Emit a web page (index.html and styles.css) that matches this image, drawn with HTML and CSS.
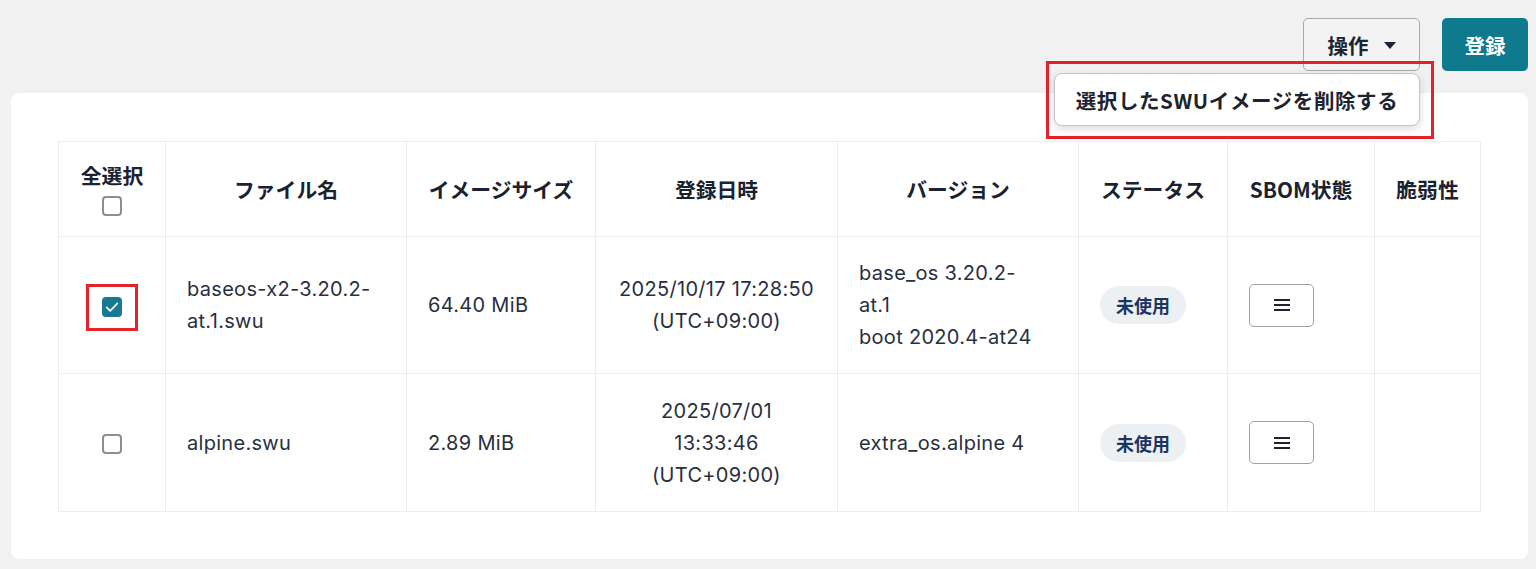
FILE: index.html
```html
<!DOCTYPE html>
<html lang="ja">
<head>
<meta charset="utf-8">
<title>SWU</title>
<link rel="stylesheet" href="styles.css">
</head>
<body>
<div class="page">
  <div class="toolbar">
    <div class="menu-wrap">
      <button class="btn btn-outline">操作 <span class="caret"></span></button>
      <div class="dropdown">
        <div class="dropdown-item">選択したSWUイメージを削除する</div>
      </div>
      <div class="highlight hl-menu"></div>
    </div>
    <button class="btn btn-primary">登録</button>
  </div>
  <div class="card">
    <table class="grid">
      <colgroup>
        <col class="c1"><col class="c2"><col class="c3"><col class="c4"><col class="c5"><col class="c6"><col class="c7"><col class="c8">
      </colgroup>
      <thead>
        <tr>
          <th><div class="selall">全選択</div><span class="cb"></span></th>
          <th>ファイル名</th>
          <th>イメージサイズ</th>
          <th>登録日時</th>
          <th>バージョン</th>
          <th>ステータス</th>
          <th>SBOM状態</th>
          <th>脆弱性</th>
        </tr>
      </thead>
      <tbody>
        <tr class="r1">
          <td class="center"><span class="cb-wrap"><span class="cb checked"><svg viewBox="0 0 20 20" width="20" height="20"><path d="M4.6 10.3l3.6 3.5 7.2-7.4" fill="none" stroke="#fff" stroke-width="1.7" stroke-linecap="round" stroke-linejoin="round"/></svg></span><span class="highlight hl-cb"></span></span></td>
          <td>baseos-x2-3.20.2-<br>at.1.swu</td>
          <td>64.40 MiB</td>
          <td class="center">2025/10/17 17:28:50<br>(UTC+09:00)</td>
          <td>base_os 3.20.2-<br>at.1<br>boot 2020.4-at24</td>
          <td><span class="badge">未使用</span></td>
          <td><button class="icon-btn"><span class="bars"></span></button></td>
          <td></td>
        </tr>
        <tr class="r2">
          <td class="center"><span class="cb"></span></td>
          <td>alpine.swu</td>
          <td>2.89 MiB</td>
          <td class="center">2025/07/01<br>13:33:46<br>(UTC+09:00)</td>
          <td>extra_os.alpine 4</td>
          <td><span class="badge">未使用</span></td>
          <td><button class="icon-btn"><span class="bars"></span></button></td>
          <td></td>
        </tr>
      </tbody>
    </table>
  </div>
</div>
</body>
</html>
```
FILE: styles.css
```css
* { box-sizing: border-box; }
html, body { margin: 0; padding: 0; }
body {
  background: #f1f1f1;
  font-family: "Inter", "Noto Sans CJK JP", sans-serif;
  color: #283040;
  width: 1536px;
  height: 569px;
  overflow: hidden;
}
.page { padding: 18px 8px 0 11px; }
.toolbar {
  display: flex;
  justify-content: flex-end;
  gap: 22px;
  height: 75px;
}
.menu-wrap { position: relative; }
.btn {
  height: 53px;
  border-radius: 5px;
  font-family: "Noto Sans CJK JP", sans-serif;
  font-weight: 700;
  font-size: 20.5px;
  cursor: pointer;
}
.btn-outline {
  width: 117px;
  background: #f3f3f3;
  border: 1px solid #a9a9a9;
  color: #1c2431;
  display: flex;
  align-items: center;
  justify-content: center;
  gap: 15px;
  padding: 0 0 0 0;
}
.caret {
  width: 0; height: 0;
  border-left: 6px solid transparent;
  border-right: 6px solid transparent;
  border-top: 7px solid #1c2431;
  margin-top: 2px;
}
.btn-primary {
  width: 86px;
  background: #0f7a8e;
  border: none;
  color: #fff;
}
.dropdown {
  position: absolute;
  right: 0;
  top: 55px;
  width: 366px;
  height: 53px;
  background: #fff;
  border: 1px solid #c4c4c4;
  border-radius: 8px;
  box-shadow: 0 3px 8px rgba(0,0,0,0.14);
  display: flex;
  align-items: center;
  justify-content: center;
  z-index: 2;
}
.dropdown-item {
  font-family: "Noto Sans CJK JP", sans-serif;
  font-weight: 700;
  font-size: 20.5px;
  letter-spacing: 0.6px;
  color: #1c2431;
}
.highlight {
  position: absolute;
  border: 3px solid #e3232b;
  z-index: 3;
  pointer-events: none;
}
.hl-menu { left: -257px; top: 43px; width: 388px; height: 78px; }
.card {
  background: #fff;
  border-radius: 8px;
  width: 1517px;
  height: 466px;
  padding: 48px 47px;
}
.grid {
  border-collapse: collapse;
  table-layout: fixed;
  width: 1422px;
}
.c1 { width: 107px; } .c2 { width: 241px; } .c3 { width: 189px; } .c4 { width: 242px; }
.c5 { width: 241px; } .c6 { width: 149px; } .c7 { width: 147px; } .c8 { width: 106px; }
.grid th, .grid td { border: 1px solid #ededed; }
.grid th {
  height: 95px;
  font-family: "Noto Sans CJK JP", sans-serif;
  font-weight: 700;
  font-size: 20.8px;
  color: #1a2230;
  text-align: center;
  vertical-align: middle;
  padding: 0;
}
.grid th:first-child { padding-top: 2px; }
.selall { line-height: 26px; margin-bottom: 0; }
.grid td {
  font-size: 20px;
  letter-spacing: 0.3px;
  line-height: 32px;
  padding: 0 10px 0 21px;
  vertical-align: middle;
}
.r1 td { height: 137px; }
.r2 td { height: 138px; }
.center { text-align: center; }
.grid td.center { padding: 0 6px; }
.cb {
  display: inline-block;
  width: 20px; height: 20px;
  border: 2px solid #8a8f96;
  border-radius: 4px;
  vertical-align: middle;
  background: #fff;
}
.cb.checked { background: #177a90; border-color: #177a90; }
.cb.checked svg { display: block; margin: -2px; }
.cb-wrap { position: relative; display: inline-block; vertical-align: middle; line-height: 0; }
.hl-cb { left: -16px; top: -13px; width: 52px; height: 47px; }
.badge {
  display: inline-flex;
  align-items: center;
  justify-content: center;
  width: 86px; height: 38px;
  border-radius: 19px;
  background: #edf0f2;
  font-family: "Noto Sans CJK JP", sans-serif;
  font-weight: 700;
  font-size: 18px;
  letter-spacing: 0;
  color: #1d3461;
  vertical-align: middle;
}
.icon-btn {
  width: 65px; height: 43px;
  background: #fff;
  border: 1px solid #a0a0a0;
  border-radius: 5px;
  display: flex;
  align-items: center;
  justify-content: center;
  padding: 0;
}
.bars {
  display: block;
  width: 16px; height: 12px;
  border-top: 2px solid #1c2431;
  border-bottom: 2px solid #1c2431;
  position: relative;
}
.bars::after {
  content: "";
  position: absolute;
  left: 0; right: 0; top: 3px;
  border-top: 2px solid #1c2431;
}
```
